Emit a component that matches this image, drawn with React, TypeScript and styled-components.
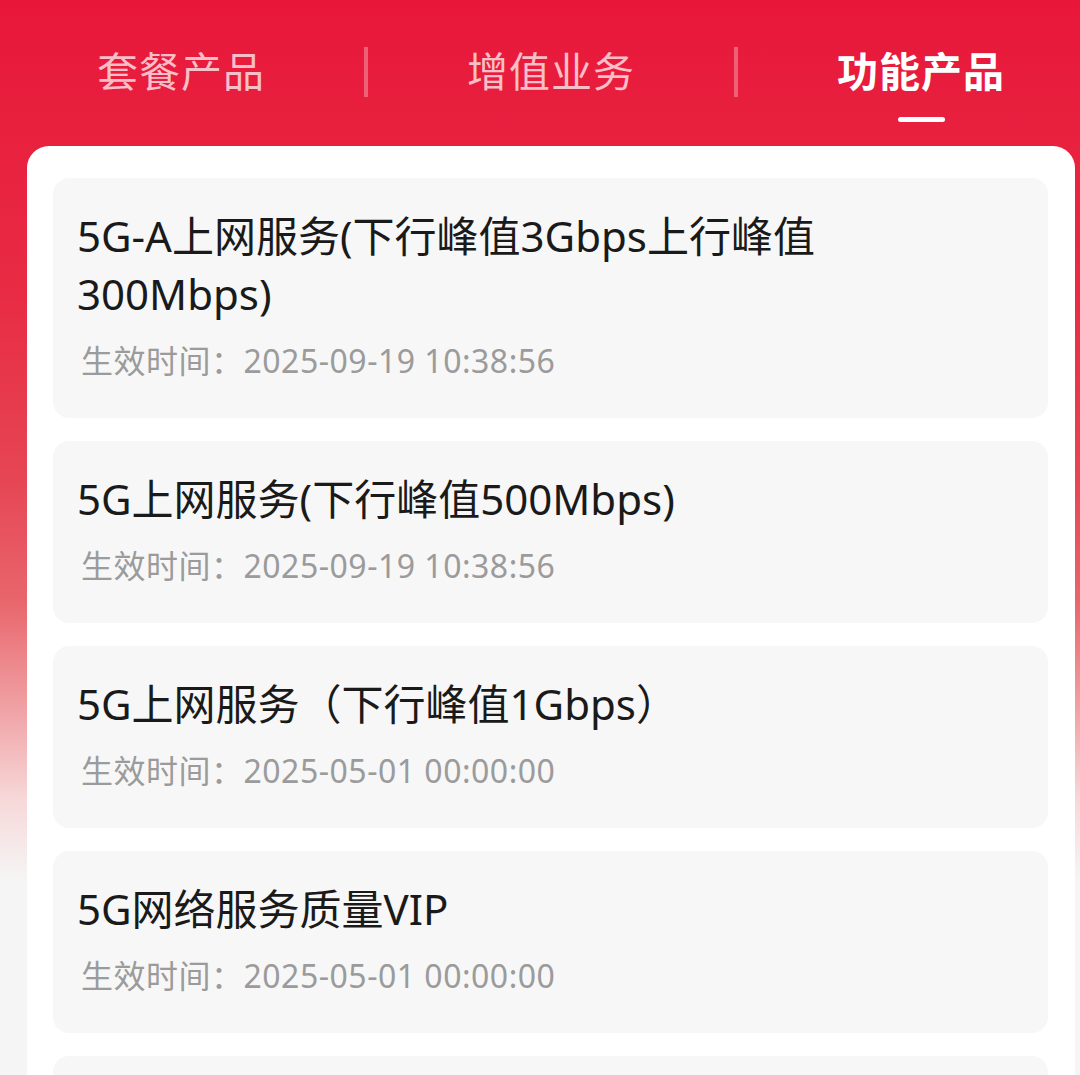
import React from 'react';
import styled, { createGlobalStyle } from 'styled-components';

const GlobalStyle = createGlobalStyle`
  html, body {
    margin: 0;
    padding: 0;
    background: #f5f5f5;
    font-family: "Noto Sans", "Noto Sans CJK SC", sans-serif;
  }
`;

const Page = styled.div`
  height: 1075px;
  overflow: hidden;
  background: linear-gradient(
    180deg,
    #e8173a 0px,
    #e82c44 300px,
    #e64654 480px,
    #e8656c 600px,
    #ef9da0 700px,
    #f7d8d9 800px,
    #f5f5f5 880px
  );
`;

const TabBar = styled.div`
  display: flex;
  width: 1110px;
  height: 146px;
  margin-left: -2px;
`;

const Tab = styled.div<{ $active?: boolean }>`
  width: 366px;
  flex-shrink: 0;
  display: flex;
  flex-direction: column;
  align-items: center;
  padding-top: 42px;
  font-family: "Noto Sans CJK SC", sans-serif;
  font-size: 41px;
  line-height: 54px;
  letter-spacing: 1px;
  font-weight: ${(p) => (p.$active ? 700 : 400)};
  color: ${(p) => (p.$active ? '#ffffff' : 'rgba(255, 255, 255, 0.72)')};
`;

const Indicator = styled.div`
  width: 47px;
  height: 5px;
  margin-top: 21px;
  border-radius: 3px;
  background: #ffffff;
`;

const Divider = styled.div`
  width: 4px;
  height: 50px;
  margin-top: 47px;
  flex-shrink: 0;
  background: rgba(255, 255, 255, 0.3);
`;

const Panel = styled.div`
  margin: 0 5px 0 27px;
  min-height: 1000px;
  padding: 32px 27px 0 26px;
  background: #ffffff;
  border-radius: 22px 22px 0 0;
  display: flex;
  flex-direction: column;
  gap: 23px;
`;

const Card = styled.div`
  background: #f7f7f7;
  border-radius: 16px;
  padding: 29px 60px 37px 24px;
`;

const Title = styled.div`
  font-size: 42px;
  line-height: 58px;
  color: #1a1a1a;
`;

const Effective = styled.div`
  margin-top: 18px;
  font-size: 32px;
  line-height: 40px;
  letter-spacing: 0.5px;
  color: #9b9b9b;
  padding-left: 4px;
`;

const TABS = ['套餐产品', '增值业务', '功能产品'];

const PRODUCTS = [
  { title: '5G-A上网服务(下行峰值3Gbps上行峰值300Mbps)', time: '2025-09-19 10:38:56' },
  { title: '5G上网服务(下行峰值500Mbps)', time: '2025-09-19 10:38:56' },
  { title: '5G上网服务（下行峰值1Gbps）', time: '2025-05-01 00:00:00' },
  { title: '5G网络服务质量VIP', time: '2025-05-01 00:00:00' },
  { title: '', time: '' },
];

const App: React.FC = () => {
  const activeTab = 2;

  return (
    <Page>
      <GlobalStyle />
      <TabBar>
        {TABS.map((name, index) => (
          <React.Fragment key={name}>
            {index > 0 && <Divider />}
            <Tab $active={index === activeTab}>
              {name}
              {index === activeTab && <Indicator />}
            </Tab>
          </React.Fragment>
        ))}
      </TabBar>

      <Panel>
        {PRODUCTS.map((item, index) => (
          <Card key={index}>
            <Title>{item.title || '\u00a0'}</Title>
            <Effective>{item.time ? `生效时间：${item.time}` : '\u00a0'}</Effective>
          </Card>
        ))}
      </Panel>
    </Page>
  );
};

export default App;
